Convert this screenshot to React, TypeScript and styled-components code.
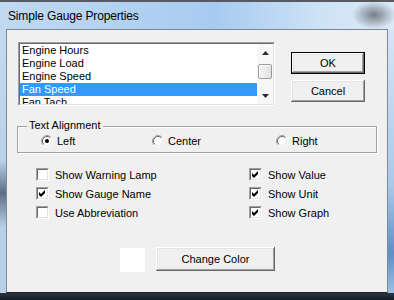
import styled, { createGlobalStyle } from 'styled-components'

const GlobalStyle = createGlobalStyle`
	html, body {
		margin: 0;
		padding: 0;
		background: #1d2633;
	}
	body {
		font-family: "Liberation Sans", Arial, sans-serif;
		color: #000;
	}
	* { box-sizing: border-box; }
`;

const Window = styled.div`
	width: 394px;
	height: 300px;
	display: grid;
	grid-template-columns: 6px 382px 6px;
	grid-template-rows: 29px 264px 7px;
	overflow: hidden;
`;

const TitleBar = styled.div`
	grid-column: 1 / 4;
	border-top: 2px solid #575b61;
	display: flex;
	align-items: center;
	padding-left: 8px;
	font-size: 12px;
	letter-spacing: -0.15px;
	background:
		radial-gradient(ellipse 22px 14px at 374px 13px, rgba(95, 100, 108, 0.8), rgba(150, 165, 180, 0)),
		linear-gradient(to right, #c1d8f0 0%, #b3d2f1 30%, #a7cbf0 55%, #cfe3f6 82%, #dbe9f6 100%);
`;

const SideFrame = styled.div<{ $right?: boolean }>`
	background: ${p => p.$right
		? 'linear-gradient(to bottom, #d6e6f5, #a9c8e8 60%, #5f8fc4 85%, #9cc0e6)'
		: 'linear-gradient(to bottom, #c3d9ef, #b9d1ea 50%, #5d6f85 62%, #b7cfe8 75%)'};
`;

const BottomBar = styled.div`
	grid-column: 1 / 4;
	background: linear-gradient(to bottom, #2a3546, #141b26);
`;

const Client = styled.div`
	border: 1px solid #7d8895;
	border-bottom-color: #222;
	background: #f0f0f0;
	display: flex;
	flex-direction: column;
	font-size: 11px;
	overflow: hidden;
`;

const TopRow = styled.div`
	display: flex;
	margin-top: 12px;
	padding-left: 11px;
	gap: 16px;
`;

const SunkenOuter = styled.div<{ $w: number; $h: number }>`
	width: ${p => p.$w}px;
	height: ${p => p.$h}px;
	border: 1px solid;
	border-color: #a0a0a0 #fff #fff #a0a0a0;
	background: #fff;
`;

const SunkenInner = styled.div`
	width: 100%;
	height: 100%;
	border: 1px solid;
	border-color: #696969 #e3e3e3 #e3e3e3 #696969;
	display: flex;
	overflow: hidden;
`;

const ListArea = styled.div`
	flex: 1;
	overflow: hidden;
`;

const ListItem = styled.div<{ $selected?: boolean }>`
	height: 13px;
	line-height: 13px;
	padding-left: 2px;
	white-space: nowrap;
	background: ${p => p.$selected ? '#3399ff' : 'transparent'};
	color: ${p => p.$selected ? '#fff' : '#000'};
`;

const ScrollBar = styled.div`
	width: 16px;
	background: #f7f7f7;
	display: flex;
	flex-direction: column;
	align-items: center;
`;

const ScrollArrow = styled.div`
	height: 17px;
	width: 100%;
	display: flex;
	align-items: center;
	justify-content: center;
`;

const ScrollThumb = styled.div`
	width: 14px;
	height: 15px;
	margin-top: 3px;
	border: 1px solid #9c9c9c;
	border-radius: 2px;
	background: linear-gradient(to right, #f4f4f4, #e2e2e2);
	box-shadow: inset 1px 1px 0 #fff;
`;

const ScrollSpacer = styled.div`
	flex: 1;
`;

const ButtonColumn = styled.div`
	display: flex;
	flex-direction: column;
	gap: 6px;
	margin-top: 10px;
`;

const Button = styled.button<{ $default?: boolean; $w: number; $h: number }>`
	width: ${p => p.$w}px;
	height: ${p => p.$h}px;
	padding: 0;
	font-family: "Liberation Sans", Arial, sans-serif;
	font-size: 11px;
	color: #000;
	background: #f0f0f0;
	border: ${p => p.$default ? '1px solid #000' : 'none'};
	box-shadow:
		inset -1px -1px 0 #696969,
		inset 1px 1px 0 #fff,
		inset -2px -2px 0 #a0a0a0,
		inset 2px 2px 0 #e3e3e3;
	cursor: pointer;
`;

const Group = styled.div`
	position: relative;
	margin: 20px 0 0 10px;
	width: 360px;
	height: 27px;
	border: 1px solid #a0a0a0;
	box-shadow: 1px 1px 0 #fff, inset 1px 1px 0 #fff;
	padding: 8px 0 0 23px;
`;

const Legend = styled.span`
	position: absolute;
	top: -8px;
	left: 9px;
	padding: 0 2px;
	line-height: 13px;
	background: #f0f0f0;
`;

const RadioRow = styled.div`
	display: grid;
	grid-template-columns: 111px 124px auto;
	height: 12px;
`;

const Choice = styled.label`
	display: flex;
	align-items: center;
	gap: 4px;
	line-height: 12px;
	white-space: nowrap;
`;

const CheckGrid = styled.div`
	display: grid;
	grid-template-columns: 213px auto;
	row-gap: 6px;
	margin-top: 15px;
	padding-left: 29px;
`;

const CheckItem = styled.label`
	display: flex;
	align-items: center;
	gap: 6px;
	height: 13px;
	white-space: nowrap;
`;

const CheckBox = styled.span`
	width: 13px;
	height: 13px;
	border: 1px solid;
	border-color: #a0a0a0 #fff #fff #a0a0a0;
	display: flex;
`;

const CheckBoxInner = styled.span`
	flex: 1;
	border: 1px solid;
	border-color: #696969 #e3e3e3 #e3e3e3 #696969;
	background: #fff;
	display: flex;
`;

const BottomRow = styled.div`
	display: flex;
	align-items: flex-start;
	gap: 11px;
	margin-top: 28px;
	padding-left: 113px;
`;

const Swatch = styled.div<{ $color: string }>`
	width: 25px;
	height: 24px;
	margin-top: 1px;
	background: ${p => p.$color};
`;

function Radio({ checked }: { checked?: boolean }) {
	return (
		<svg width="12" height="12" viewBox="0 0 12 12">
			<circle cx="6" cy="6" r="5" fill="#fff" />
			<path d="M2.11 9.89 A5.5 5.5 0 0 1 9.89 2.11" fill="none" stroke="#a0a0a0" strokeWidth="1" />
			<path d="M9.89 2.11 A5.5 5.5 0 0 1 2.11 9.89" fill="none" stroke="#fff" strokeWidth="1" />
			<path d="M2.82 9.18 A4.5 4.5 0 0 1 9.18 2.82" fill="none" stroke="#696969" strokeWidth="1" />
			<path d="M9.18 2.82 A4.5 4.5 0 0 1 2.82 9.18" fill="none" stroke="#e3e3e3" strokeWidth="1" />
			{checked && <circle cx="6" cy="6" r="2" fill="#000" />}
		</svg>
	)
}

function Check({ checked, label }: { checked?: boolean; label: string }) {
	return (
		<CheckItem>
			<CheckBox>
				<CheckBoxInner>
					{checked && (
						<svg width="9" height="9" viewBox="0 0 9 9">
							<path d="M1 3 L3 5 L7 1 L7 4 L3 8 L1 6 Z" fill="#000" />
						</svg>
					)}
				</CheckBoxInner>
			</CheckBox>
			{label}
		</CheckItem>
	)
}

function Arrow({ down }: { down?: boolean }) {
	return (
		<svg width="7" height="4" viewBox="0 0 7 4">
			<path d={down ? 'M0 0 H7 L3.5 4 Z' : 'M0 4 H7 L3.5 0 Z'} fill="#2a2a2a" />
		</svg>
	)
}

// only the rows that fit in the box are listed
const items = ['Engine Hours', 'Engine Load', 'Engine Speed', 'Fan Speed', 'Fan Tach']

function App() {
	const selected = 'Fan Speed';
	return (
		<>
			<GlobalStyle />
			<Window>
				<TitleBar>Simple Gauge Properties</TitleBar>
				<SideFrame />
				<Client>
					<TopRow>
						<SunkenOuter $w={257} $h={64}>
							<SunkenInner>
								<ListArea>
									{items.map(name => (
										<ListItem key={name} $selected={name === selected}>{name}</ListItem>
									))}
								</ListArea>
								<ScrollBar>
									<ScrollArrow><Arrow /></ScrollArrow>
									<ScrollThumb />
									<ScrollSpacer />
									<ScrollArrow><Arrow down /></ScrollArrow>
								</ScrollBar>
							</SunkenInner>
						</SunkenOuter>
						<ButtonColumn>
							<Button $default $w={74} $h={22}>OK</Button>
							<Button $w={74} $h={22}>Cancel</Button>
						</ButtonColumn>
					</TopRow>
					<Group>
						<Legend>Text Alignment</Legend>
						<RadioRow>
							<Choice><Radio checked />Left</Choice>
							<Choice><Radio />Center</Choice>
							<Choice><Radio />Right</Choice>
						</RadioRow>
					</Group>
					<CheckGrid>
						<Check label="Show Warning Lamp" />
						<Check checked label="Show Value" />
						<Check checked label="Show Gauge Name" />
						<Check checked label="Show Unit" />
						<Check label="Use Abbreviation" />
						<Check checked label="Show Graph" />
					</CheckGrid>
					<BottomRow>
						<Swatch $color="#fff" />
						<Button $w={119} $h={24}>Change Color</Button>
					</BottomRow>
				</Client>
				<SideFrame $right />
				<BottomBar />
			</Window>
		</>
	)
}

export default App;
